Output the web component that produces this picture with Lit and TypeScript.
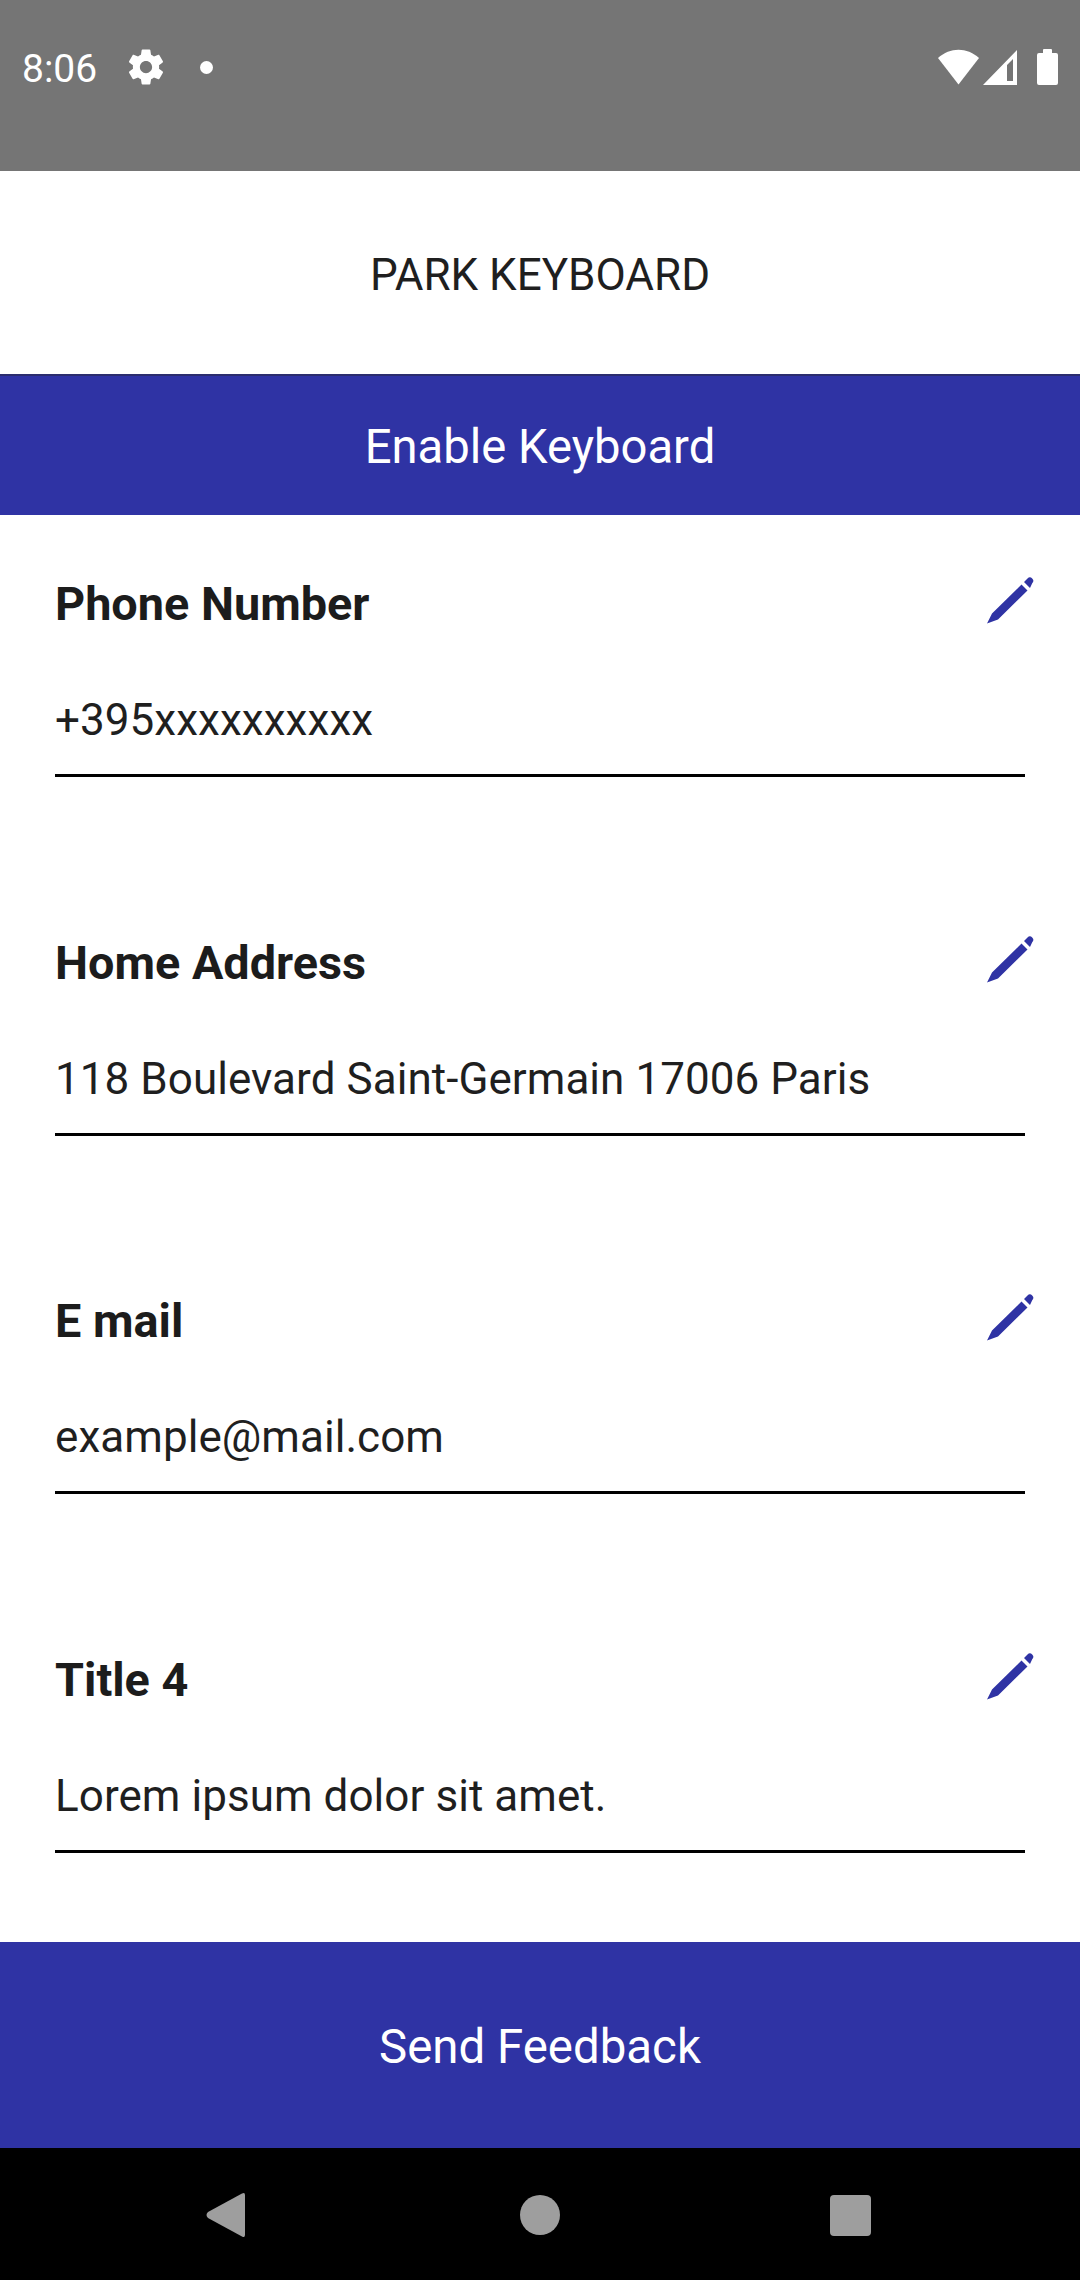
import { LitElement, html, css } from "lit";
import { customElement } from "lit/decorators.js";

const fields = [
  ["Phone Number", "+395xxxxxxxxxx"],
  ["Home Address", "118 Boulevard Saint-Germain 17006 Paris"],
  ["E mail", "example@mail.com"],
  ["Title 4", "Lorem ipsum dolor sit amet."],
];

@customElement("app-root")
export class AppRoot extends LitElement {
  static styles = css`
    :host { display: block; width: 1080px; height: 2280px; font-family: Roboto, sans-serif; background: #fff; color: #1c1c1c; overflow: hidden; }
    .page { display: flex; flex-direction: column; height: 2280px; }
    .status { height: 171px; background: #757575; color: #fff; display: flex; align-items: flex-start; padding: 0 10px 0 22px; box-sizing: border-box; flex: none; }
    .time { font-size: 39px; line-height: 46px; margin-top: 46px; width: 103px; }
    .gear { width: 42px; height: 42px; margin-top: 46px; }
    .dot { width: 13px; height: 13px; border-radius: 50%; background: #fff; margin: 61px 0 0 33px; }
    .right { margin-left: auto; margin-top: 40px; width: 140px; height: 50px; }
    .head { height: 203px; flex: none; display: flex; align-items: center; justify-content: center; font-size: 44px; color: #1f1f1f; padding-top: 5px; box-sizing: border-box; }
    .enable { height: 141px; flex: none; box-sizing: border-box; background: #2f33a4; border-top: 2px solid #2b2d6e; color: #fff; display: flex; align-items: center; justify-content: center; font-size: 47.2px; padding-top: 2px; }
    .fields { flex: 1; min-height: 0; padding: 0 55px; display: flex; flex-direction: column; }
    .field { height: 358.6px; flex: none; box-sizing: border-box; padding-top: 55px; }
    .title { height: 68px; line-height: 68px; font-size: 46.8px; font-weight: 700; color: #1c1c1c; position: relative; }
    .pencil { width: 48px; height: 48px; position: absolute; right: -10px; top: 7px; }
    .value { font-size: 44px; letter-spacing: 0.05px; line-height: 52px; margin-top: 56px; height: 83px; box-sizing: border-box; border-bottom: 3px solid #000; color: #1f1f1f; }
    .send { height: 206px; flex: none; background: #2f33a4; color: #fff; display: flex; align-items: center; justify-content: center; font-size: 47.4px; padding-top: 3px; box-sizing: border-box; }
    .nav { height: 132px; flex: none; background: #000; }
    .nav svg { width: 1080px; height: 132px; display: block; }
  `;

  render() {
    return html`<div class="page">
      <div class="status">
        <span class="time">8:06</span>
        <svg class="gear" viewBox="0 0 24 24"><path fill="#fff" d="M19.43 12.98c.04-.32.07-.64.07-.98s-.03-.66-.07-.98l2.11-1.65c.19-.15.24-.42.12-.64l-2-3.46c-.12-.22-.39-.3-.61-.22l-2.49 1c-.52-.4-1.08-.73-1.69-.98l-.38-2.65C14.46 2.18 14.25 2 14 2h-4c-.25 0-.46.18-.49.42l-.38 2.65c-.61.25-1.17.59-1.69.98l-2.49-1c-.23-.09-.49 0-.61.22l-2 3.46c-.13.22-.07.49.12.64l2.11 1.65c-.04.32-.07.65-.07.98s.03.66.07.98l-2.11 1.65c-.19.15-.24.42-.12.64l2 3.46c.12.22.39.3.61.22l2.49-1c.52.4 1.08.73 1.69.98l.38 2.65c.03.24.24.42.49.42h4c.25 0 .46-.18.49-.42l.38-2.65c.61-.25 1.17-.59 1.69-.98l2.49 1c.23.09.49 0 .61-.22l2-3.46c.12-.22.07-.49-.12-.64l-2.11-1.65zM12 15.5c-1.93 0-3.5-1.57-3.5-3.5s1.57-3.5 3.5-3.5 3.5 1.57 3.5 3.5-1.57 3.5-3.5 3.5z"/></svg>
        <span class="dot"></span>
        <svg class="right" viewBox="930 40 140 50">
          <path fill="#fff" d="M938 58 C950 47 967 47 979 58 L958.500 84.500 Z"/>
          <path fill="#fff" fill-rule="evenodd" d="M983 85 L1017 50 V85 Z M1013 59 L1007 65 V81 H1013 Z"/>
          <path fill="#fff" d="M1043 53 V50 a1 1 0 0 1 1-1 h7 a1 1 0 0 1 1 1 v3 h4 a2 2 0 0 1 2 2 v28 a2 2 0 0 1-2 2 h-17 a2 2 0 0 1-2-2 V55 a2 2 0 0 1 2-2 Z"/>
        </svg>
      </div>
      <div class="head">PARK KEYBOARD</div>
      <div class="enable">Enable Keyboard</div>
      <div class="fields">
        ${fields.map(([t, v]) => html`<div class="field">
          <div class="title"><span>${t}</span>
            <svg class="pencil" viewBox="0 0 48 48">
              <path fill="#2f33a4" d="M0 46.500 L5 36.500 L34.500 7.500 L40.500 13.500 L11 42.500 Z M37 5 L40.500 1.500 a3.300 3.300 0 0 1 4.700 0 a3.300 3.300 0 0 1 0 4.700 L43 11 Z"/>
            </svg>
          </div>
          <div class="value">${v}</div>
        </div>`)}
      </div>
      <div class="send">Send Feedback</div>
      <div class="nav">
        <svg viewBox="0 0 1080 132">
          <path fill="#9e9e9e" d="M242 45.500 L208 64 Q205 67 208 70 L242 88.500 Q245 90 245 87 V47 Q245 44 242 45.500 Z"/>
          <circle cx="540" cy="67" r="20" fill="#9e9e9e"/>
          <rect x="830" y="47" width="41" height="41" rx="4" fill="#9e9e9e"/>
        </svg>
      </div>
    </div>`;
  }
}
